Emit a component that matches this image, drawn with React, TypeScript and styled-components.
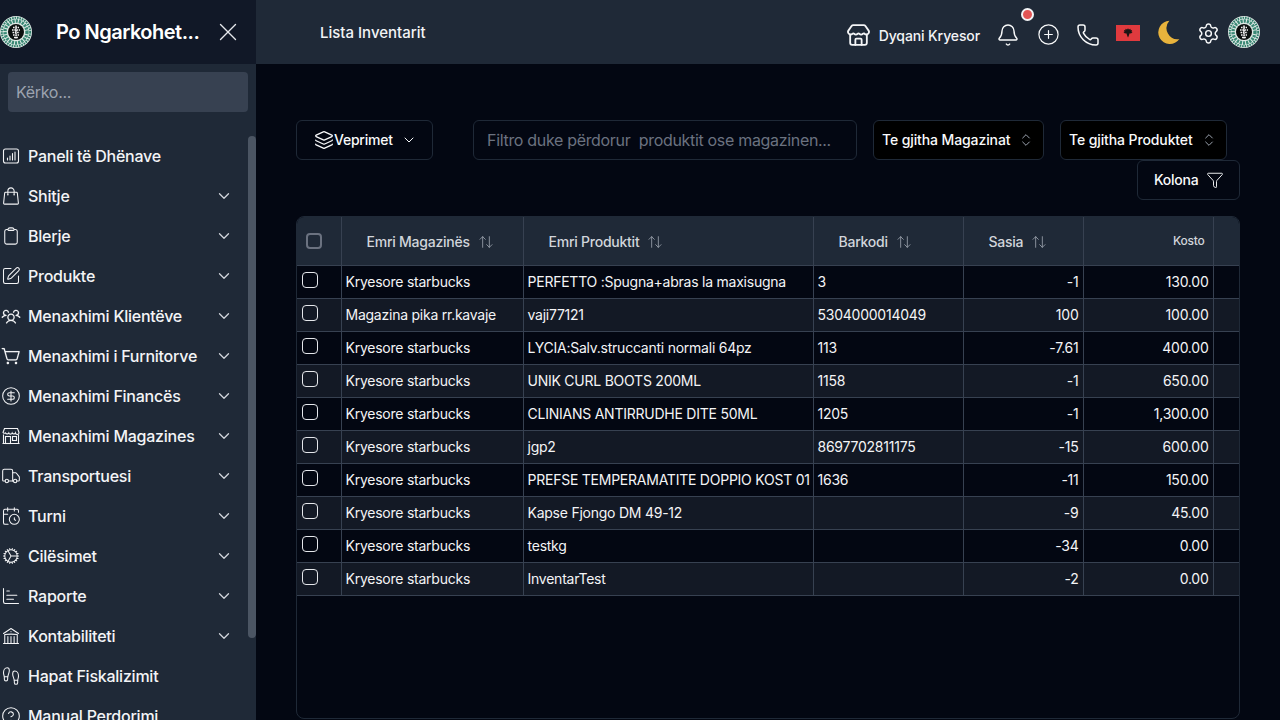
import React from 'react';
import styled, { createGlobalStyle } from 'styled-components';
import {
  ArrowUpDown,
  Bell,
  CalendarClock,
  ChartBar,
  ChevronDown,
  ChevronsUpDown,
  CircleDollarSign,
  CircleHelp,
  CirclePlus,
  Footprints,
  Funnel,
  Layers,
  Phone,
  Settings,
  SquarePen,
  Store,
  Truck,
  X,
} from 'lucide-react';
import {
  HiOutlineBuildingLibrary,
  HiOutlineClipboard,
  HiOutlineCog,
  HiOutlineShoppingBag,
} from 'react-icons/hi2';
import { PiShoppingCartSimple, PiUsersThree } from 'react-icons/pi';

const GlobalStyle = createGlobalStyle`
  html, body {
    margin: 0;
    padding: 0;
    height: 100%;
    overflow: hidden;
    background: #030712;
    font-family: Inter, 'Liberation Sans', sans-serif;
    letter-spacing: -0.015em;
    color: #fff;
  }
  * { box-sizing: border-box; }
`;

const Shell = styled.div`
  display: flex;
  width: 1280px;
  height: 720px;
  overflow: hidden;
`;

const Sidebar = styled.aside`
  width: 256px;
  flex: none;
  height: 720px;
  display: flex;
  flex-direction: column;
  background: #1f2937;
`;

const Brand = styled.div`
  height: 64px;
  flex: none;
  display: flex;
  align-items: center;
  background: #111827;
  color: #fff;
`;

const BrandTitle = styled.div`
  margin-left: 24px;
  width: 157px;
  font-size: 20px;
  font-weight: 600;
  letter-spacing: -0.025em;
  white-space: nowrap;
`;

const CloseButton = styled.span`
  display: flex;
  color: #e5e7eb;
`;

const SearchWrap = styled.div`
  flex: none;
  height: 72px;
  padding: 8px 8px 24px;
`;

const SearchInput = styled.input`
  display: block;
  width: 100%;
  height: 40px;
  padding: 0 8px;
  border: none;
  border-radius: 4px;
  background: #374151;
  font-family: inherit;
  font-size: 16px;
  letter-spacing: -0.02em;
  color: #fff;
  outline: none;
  &::placeholder { color: #9ca3af; opacity: 1; }
`;

const Nav = styled.nav`
  position: relative;
  flex: 1;
  min-height: 0;
  overflow: hidden;
`;

const ScrollThumb = styled.span`
  position: absolute;
  top: 0;
  right: 0;
  width: 8px;
  height: 502px;
  border-radius: 4px;
  background: #4b5563;
`;

const NavItem = styled.div`
  height: 40px;
  display: flex;
  align-items: center;
  padding: 0 23px 0 1px;
  gap: 7px;
  font-size: 16px;
  font-weight: 500;
  color: #f3f4f6;
  white-space: nowrap;
  svg:first-child { flex: none; }
`;

const NavLabel = styled.span`
  flex: 1;
`;

const NavChevron = styled.span`
  display: flex;
  color: #d1d5db;
`;

const Main = styled.main`
  flex: 1;
  min-width: 0;
  display: flex;
  flex-direction: column;
`;

const Topbar = styled.header`
  height: 64px;
  flex: none;
  display: flex;
  align-items: center;
  justify-content: space-between;
  padding: 0 20px 0 64px;
  background: #1f2937;
`;

const PageTitle = styled.div`
  font-size: 15px;
  font-weight: 500;
  letter-spacing: 0;
  color: #f3f4f6;
`;

const TopActions = styled.div`
  display: flex;
  align-items: center;
  gap: 16px;
`;

const ShopLink = styled.div`
  display: flex;
  align-items: center;
  gap: 8px;
  margin-top: 7px;
  font-size: 14px;
  font-weight: 500;
  letter-spacing: -0.008em;
  color: #f3f4f6;
`;

const IconSlot = styled.span<{ $drop?: number }>`
  position: relative;
  top: ${(props) => props.$drop ?? 0}px;
  width: 24px;
  height: 24px;
  display: flex;
  align-items: center;
  justify-content: center;
  color: #f9fafb;
`;

const Badge = styled.span`
  position: absolute;
  top: -15px;
  right: -14px;
  width: 13px;
  height: 13px;
  border-radius: 50%;
  background: #e25555;
  border: 2px solid #f3f4f6;
`;

const AvatarSlot = styled.span`
  display: flex;
  margin-left: -8px;
`;

const Content = styled.div`
  flex: 1;
  min-height: 0;
  padding: 56px 40px 1px;
  display: flex;
  flex-direction: column;
`;

const Toolbar = styled.div`
  display: flex;
  flex-wrap: wrap;
  align-items: center;
  margin-bottom: 16px;
`;

const OutlineButton = styled.button`
  height: 40px;
  display: flex;
  align-items: center;
  padding-bottom: 2px;
  border: 1px solid #1f2937;
  border-radius: 6px;
  background: #030712;
  font-family: inherit;
  font-size: 14px;
  font-weight: 500;
  letter-spacing: inherit;
  color: #f9fafb;
`;

const ActionsButton = styled(OutlineButton)`
  width: 137px;
  padding-left: 17px;
  svg:last-child { margin-left: 8px; }
`;

const ColumnsButton = styled(OutlineButton)`
  width: 103px;
  margin-left: auto;
  padding-left: 16px;
  gap: 8px;
`;

const FilterInput = styled.input`
  width: 384px;
  height: 40px;
  margin-left: 40px;
  padding: 0 13px;
  border: 1px solid #1f2937;
  border-radius: 6px;
  background: #030712;
  font-family: inherit;
  font-size: 16px;
  letter-spacing: -0.02em;
  color: #fff;
  outline: none;
  &::placeholder { color: #6b7280; opacity: 1; }
`;

const SelectBox = styled.div<{ $width: number }>`
  width: ${(props) => props.$width}px;
  height: 40px;
  margin-left: 16px;
  display: flex;
  align-items: center;
  justify-content: space-between;
  padding: 0 9px 1px 8px;
  border: 1px solid #1f2937;
  border-radius: 6px;
  background: #000;
  font-size: 14px;
  font-weight: 500;
  letter-spacing: -0.008em;
  color: #f9fafb;
  svg { color: #9ca3af; }
`;

const TableFrame = styled.div`
  flex: 1;
  min-height: 0;
  overflow: hidden;
  border: 1px solid #1f2937;
  border-radius: 8px;
`;

const Table = styled.table`
  width: 942px;
  table-layout: fixed;
  border-collapse: collapse;
  font-size: 14px;
`;

const HeadRow = styled.tr`
  height: 48px;
  background: #1f2937;
  border-bottom: 1px solid #374151;
`;

const HeadCell = styled.th<{ $align?: string }>`
  padding: 2px 8px 0 25px;
  border-right: 1px solid #374151;
  text-align: ${(props) => props.$align ?? 'left'};
  font-weight: 500;
  color: #d1d5db;
  white-space: nowrap;
  &:last-child { border-right: none; }
`;

const KostoCell = styled(HeadCell)`
  font-size: 12px;
  padding-top: 0;
`;

const CheckHeadCell = styled.th`
  padding: 0 0 0 9px;
  border-right: 1px solid #374151;
  text-align: left;
`;

const HeadLabel = styled.span`
  display: inline-flex;
  align-items: center;
  gap: 8px;
  svg { color: #9ca3af; }
`;

const Row = styled.tr`
  height: 33px;
  border-bottom: 1px solid #374151;
  &:nth-child(even) { background: #131925; }
`;

const Cell = styled.td<{ $right?: boolean }>`
  padding: 0 4px;
  border-right: 1px solid #374151;
  text-align: ${(props) => (props.$right ? 'right' : 'left')};
  color: #f3f4f6;
  white-space: nowrap;
  overflow: hidden;
  &:last-child { border-right: none; }
`;

const CheckCell = styled.td`
  padding: 0 0 4px 5px;
  border-right: 1px solid #374151;
`;

const Check = styled.input.attrs({ type: 'checkbox' })<{ $head?: boolean }>`
  appearance: none;
  display: block;
  width: 16px;
  height: 16px;
  margin: 0;
  background: transparent;
  border: ${(props) => (props.$head ? '2px solid #6b7280' : '1px solid #e5e7eb')};
  border-radius: 4px;
`;

const Logo = ({ size = 32 }: { size?: number }) => (
  <svg width={size} height={size} viewBox="0 0 32 32" style={{ flex: 'none' }}>
    <circle cx="16" cy="16" r="16" fill="#dfeae6" />
    <circle cx="16" cy="16" r="14.2" fill="none" stroke="#2f7d6a" strokeWidth="2" strokeDasharray="1.6 .9" />
    <circle cx="16" cy="16" r="11" fill="none" stroke="#3b8a76" strokeWidth="3.4" strokeDasharray="2.2 1" />
    <circle cx="16" cy="16" r="8" fill="#0b0f0e" />
    <path
      d="M16 9.5v13M13 11.5h6M12 14h8M12.5 16.5h7M13 19h6M14 21.5h4"
      stroke="#f4f4f4"
      strokeWidth="1.5"
      strokeDasharray="1.6 .7"
      fill="none"
    />
  </svg>
);

const PanelIcon = ({ size = 20 }: { size?: number }) => (
  <svg width={size} height={size} viewBox="0 0 20 20" fill="none" stroke="currentColor" strokeWidth="1.1">
    <rect x="2.5" y="3" width="15" height="14" rx="2" />
    <path d="M6.5 14v-2M9 14V10M11.5 14V7.5M14 14V6" strokeLinecap="round" />
  </svg>
);

const ShopIcon = ({ size = 20 }: { size?: number }) => (
  <svg width={size} height={size} viewBox="0 0 20 20" fill="none" stroke="currentColor" strokeWidth="1.1">
    <path d="M2.5 17.5V8.5M17.5 17.5V8.5M1.5 17.5h17" />
    <path d="M3.5 2.5h13l1.5 4a1.8 1.8 0 0 1-3.6.4 1.8 1.8 0 0 1-3.2 0 1.8 1.8 0 0 1-3.4 0 1.8 1.8 0 0 1-3.2 0A1.8 1.8 0 0 1 2 6.5z" />
    <rect x="4.5" y="10.5" width="5" height="7" />
    <rect x="11.5" y="10.5" width="4" height="4" />
  </svg>
);

const Flag = () => (
  <svg width="24" height="16" viewBox="0 0 24 16">
    <rect width="24" height="16" fill="#e03a3e" />
    <path
      d="M12 3.2l.9 1.3 1.8-.8-.3 1.6 1.7-.2-.7 1.5 1.2.3-1.6 1.6-1.3-.2-.6 1.4-.6 1.8-.5 1-.5-1-.6-1.8-.6-1.4-1.3.2-1.6-1.6 1.2-.3-.7-1.5 1.7.2-.3-1.6 1.8.8z"
      fill="#1a1414"
    />
  </svg>
);

const Moon = () => (
  <svg width="24" height="24" viewBox="0 0 24 24">
    <path d="M13.4.8A11.6 11.6 0 1 0 23.4 19 11 11 0 0 1 13.4.8z" fill="#e8b33c" />
  </svg>
);

const menu = [
  { label: 'Paneli të Dhënave', icon: PanelIcon, sub: false },
  { label: 'Shitje', icon: HiOutlineShoppingBag, sub: true },
  { label: 'Blerje', icon: HiOutlineClipboard, sub: true },
  { label: 'Produkte', icon: SquarePen, sub: true },
  { label: 'Menaxhimi Klientëve', icon: PiUsersThree, sub: true },
  { label: 'Menaxhimi i Furnitorve', icon: PiShoppingCartSimple, sub: true },
  { label: 'Menaxhimi Financës', icon: CircleDollarSign, sub: true },
  { label: 'Menaxhimi Magazines', icon: ShopIcon, sub: true },
  { label: 'Transportuesi', icon: Truck, sub: true },
  { label: 'Turni', icon: CalendarClock, sub: true },
  { label: 'Cilësimet', icon: HiOutlineCog, sub: true },
  { label: 'Raporte', icon: ChartBar, sub: true },
  { label: 'Kontabiliteti', icon: HiOutlineBuildingLibrary, sub: true },
  { label: 'Hapat Fiskalizimit', icon: Footprints, sub: false },
  { label: 'Manual Perdorimi', icon: CircleHelp, sub: false },
];

const rows = [
  ['Kryesore starbucks', 'PERFETTO :Spugna+abras la maxisugna', '3', '-1', '130.00'],
  ['Magazina pika rr.kavaje', 'vaji77121', '5304000014049', '100', '100.00'],
  ['Kryesore starbucks', 'LYCIA:Salv.struccanti normali 64pz', '113', '-7.61', '400.00'],
  ['Kryesore starbucks', 'UNIK CURL BOOTS 200ML', '1158', '-1', '650.00'],
  ['Kryesore starbucks', 'CLINIANS ANTIRRUDHE DITE 50ML', '1205', '-1', '1,300.00'],
  ['Kryesore starbucks', 'jgp2', '8697702811175', '-15', '600.00'],
  ['Kryesore starbucks', 'PREFSE TEMPERAMATITE DOPPIO KOST 01', '1636', '-11', '150.00'],
  ['Kryesore starbucks', 'Kapse Fjongo DM 49-12', '', '-9', '45.00'],
  ['Kryesore starbucks', 'testkg', '', '-34', '0.00'],
  ['Kryesore starbucks', 'InventarTest', '', '-2', '0.00'],
];

const columns = [44, 182, 290, 150, 120, 130, 26];

export default function App() {
  return (
    <>
      <GlobalStyle />
      <Shell>
        <Sidebar>
          <Brand>
            <Logo />
            <BrandTitle>Po Ngarkohet...</BrandTitle>
            <CloseButton>
              <X size={30} strokeWidth={1.1} />
            </CloseButton>
          </Brand>
          <SearchWrap>
            <SearchInput placeholder="Kërko..." />
          </SearchWrap>
          <Nav>
            {menu.map(({ label, icon: Icon, sub }) => (
              <NavItem key={label}>
                <Icon size={20} strokeWidth={1.25} />
                <NavLabel>{label}</NavLabel>
                {sub && (
                  <NavChevron>
                    <ChevronDown size={18} strokeWidth={1.75} />
                  </NavChevron>
                )}
              </NavItem>
            ))}
            <ScrollThumb />
          </Nav>
        </Sidebar>
        <Main>
          <Topbar>
            <PageTitle>Lista Inventarit</PageTitle>
            <TopActions>
              <ShopLink>
                <Store size={25} strokeWidth={1.75} />
                Dyqani Kryesor
              </ShopLink>
              <IconSlot $drop={3}>
                <Bell size={26} strokeWidth={1.4} />
                <Badge />
              </IconSlot>
              <IconSlot $drop={2}>
                <CirclePlus size={23} strokeWidth={1.25} />
              </IconSlot>
              <IconSlot $drop={3}>
                <Phone size={24} strokeWidth={1.5} />
              </IconSlot>
              <IconSlot $drop={1}>
                <Flag />
              </IconSlot>
              <IconSlot>
                <Moon />
              </IconSlot>
              <IconSlot $drop={1}>
                <Settings size={23} strokeWidth={1.5} />
              </IconSlot>
              <AvatarSlot>
                <Logo />
              </AvatarSlot>
            </TopActions>
          </Topbar>
          <Content>
            <Toolbar>
              <ActionsButton>
                <Layers size={20} strokeWidth={1.5} />
                Veprimet
                <ChevronDown size={16} strokeWidth={1.5} />
              </ActionsButton>
              <FilterInput placeholder="Filtro duke përdorur  produktit ose magazinen..." />
              <SelectBox $width={171}>
                Te gjitha Magazinat
                <ChevronsUpDown size={16} strokeWidth={1.5} />
              </SelectBox>
              <SelectBox $width={167}>
                Te gjitha Produktet
                <ChevronsUpDown size={16} strokeWidth={1.5} />
              </SelectBox>
              <ColumnsButton>
                Kolona
                <Funnel size={18} strokeWidth={1.25} />
              </ColumnsButton>
            </Toolbar>
            <TableFrame>
              <Table>
                <colgroup>
                  {columns.map((width, i) => (
                    <col key={i} width={width} />
                  ))}
                </colgroup>
                <thead>
                  <HeadRow>
                    <CheckHeadCell>
                      <Check $head readOnly />
                    </CheckHeadCell>
                    {['Emri Magazinës', 'Emri Produktit', 'Barkodi', 'Sasia'].map((title) => (
                      <HeadCell key={title}>
                        <HeadLabel>
                          {title}
                          <ArrowUpDown size={16} strokeWidth={1.25} />
                        </HeadLabel>
                      </HeadCell>
                    ))}
                    <KostoCell $align="right">Kosto</KostoCell>
                    <HeadCell />
                  </HeadRow>
                </thead>
                <tbody>
                  {rows.map((row, i) => (
                    <Row key={i}>
                      <CheckCell>
                        <Check readOnly />
                      </CheckCell>
                      <Cell>{row[0]}</Cell>
                      <Cell>{row[1]}</Cell>
                      <Cell>{row[2]}</Cell>
                      <Cell $right>{row[3]}</Cell>
                      <Cell $right>{row[4]}</Cell>
                      <Cell />
                    </Row>
                  ))}
                </tbody>
              </Table>
            </TableFrame>
          </Content>
        </Main>
      </Shell>
    </>
  );
}
